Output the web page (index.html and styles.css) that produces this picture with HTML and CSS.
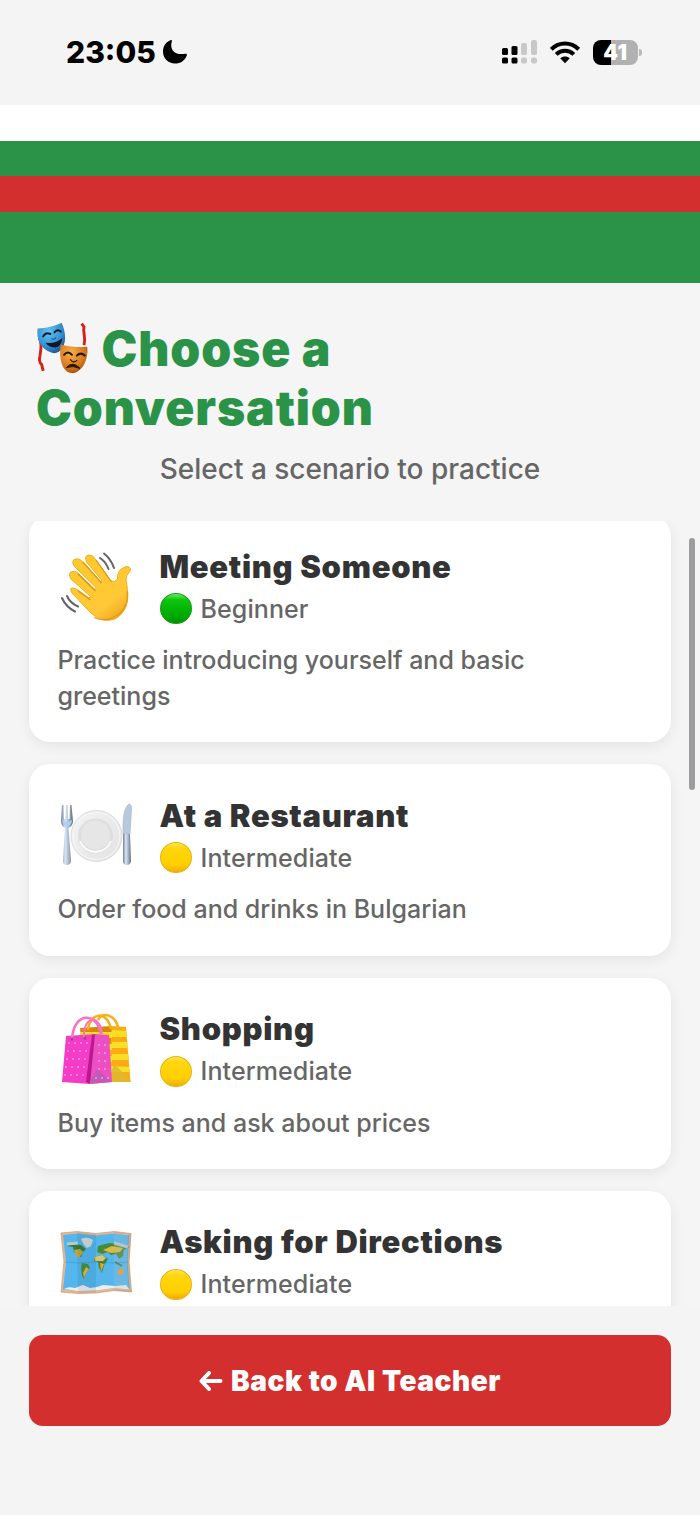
FILE: index.html
```html
<!DOCTYPE html>
<html lang="en">
<head>
    <meta charset="UTF-8">
    <meta name="viewport" content="width=device-width, initial-scale=1.0">
    <title>Choose a Conversation</title>
    <link rel="stylesheet" href="styles.css">
</head>
<body>
    <div class="status-bar">
        <span class="time">23:05</span>
        <svg class="moon" width="26" height="26" viewBox="0 0 26 26"><path d="M8.500 1.200C9.500.8 10.200 1.400 9.800 2.400C7.500 10 12 16.500 23.300 14.800C24.500 14.600 25.200 15.300 24.800 16.400C22.800 21.600 18.500 24.500 13 24.500C6 24.500 1 19.300 1 12.600C1 7.200 4 2.700 8.500 1.200Z"/></svg>
        <svg class="signal" width="36" height="26" viewBox="0 0 36 26">
            <rect x="0" y="9" width="6" height="7" rx="1.500"/><rect x="9.500" y="7" width="6" height="9" rx="1.500"/>
            <rect x="0" y="18.500" width="6" height="6" rx="1.500"/><rect x="9.500" y="18.500" width="6" height="6" rx="1.500"/>
            <g fill="#c8c8c8"><rect x="19" y="4" width="6" height="12" rx="2"/><rect x="29" y="1" width="6" height="15" rx="2"/><rect x="19" y="18.500" width="6" height="6" rx="2"/><rect x="29" y="18.500" width="6" height="6" rx="2"/></g>
        </svg>
        <svg class="wifi" width="30" height="23" viewBox="0 0 30 23">
            <g fill="none" stroke="#000" stroke-width="4"><path d="M1.300 8.300C9 .5 21 .5 28.700 8.300"/><path d="M6.200 13.400C11.400 8.600 18.600 8.600 23.800 13.400"/></g>
            <path d="M10.200 17.300C13 14.900 17 14.900 19.800 17.300L15 22.200Z"/>
        </svg>
        <div class="battery">41</div>
    </div>

    <div class="flag">
        <div class="white"></div>
        <div class="green"></div>
        <div class="red"></div>
        <div class="green wide"></div>
    </div>

    <header>
        <h1>
            <svg class="masks" width="52" height="52" viewBox="0 0 65 65">
                <defs>
                    <radialGradient id="blueMask" cx=".4" cy=".3" r=".8"><stop offset="0" stop-color="#62c4f4"/><stop offset=".6" stop-color="#328fd2"/><stop offset="1" stop-color="#194a8c"/></radialGradient>
                    <radialGradient id="orangeMask" cx=".4" cy=".3" r=".8"><stop offset="0" stop-color="#f8b04a"/><stop offset=".6" stop-color="#d9791c"/><stop offset="1" stop-color="#964609"/></radialGradient>
                </defs>
                <g fill="none" stroke="#d42115" stroke-width="3.600"><path d="M4 20C8 26 6 36 5 42Q3 50 7 53L9 61"/><path d="M57 2L60 6C58 14 63 18 60 29"/></g>
                <path d="M2 8C12 8 24 5 32 1C38 14 38 28 31 35Q26 41 19 38C7 34 0 23 2 8Z" fill="url(#blueMask)"/>
                <g fill="none" stroke="#141b28" stroke-width="2.500" stroke-linecap="round"><path d="M9 18Q12 12 18 15"/><path d="M23 13Q27 8 31 12"/></g>
                <path d="M12 26Q24 28 33 20Q31 32 24 32Q16 32 12 26Z" fill="#101725"/>
                <path d="M19 20Q22 24 25 19" fill="none" stroke="#1b5c9e" stroke-width="1.500"/>
                <path d="M31 28C42 31 54 32 64 31C66 46 58 63 46 64C33 64 28 46 31 28Z" fill="url(#orangeMask)"/>
                <g fill="none" stroke="#22160d" stroke-width="2.500" stroke-linecap="round"><path d="M35 41Q40 35 45 41"/><path d="M51 42Q56 37 61 42"/><path d="M43 47Q47 52 51 48" stroke-width="1.500"/></g>
                <path d="M38 57Q46 48 55 58Q46 54 38 57Z" fill="#22160d" stroke="#22160d" stroke-width="1.200"/>
            </svg>
            <span>Choose a</span><br>
            <span>Conversation</span>
        </h1>
        <p>Select a scenario to practice</p>
    </header>

    <main>
        <div class="card">
            <div class="card-header">
                <svg class="icon" width="76" height="76" viewBox="7 7 76 76">
                    <defs><linearGradient id="hand" x1="0" y1="0" x2=".7" y2="1"><stop offset="0" stop-color="#ffc928"/><stop offset=".8" stop-color="#ffc837"/><stop offset="1" stop-color="#f4ad20"/></linearGradient></defs>
                    <path d="M22 52Q19 47 22.500 47Q25 47 28 49L39 57L40.500 55.500L21 38Q18 33 21 31Q25 29 28 32L44.500 48L46 46.500L24 25Q21 19 25.500 18Q29.500 17 33 21L50.500 40.500L52 39.500L36.500 21Q34 15 38.500 14Q43 13.500 46 19L61 40Q65 42 67.500 38Q67 30 73 27Q78 24 80.500 27.500Q81 30 77 34Q75 38 77 45Q80 62 73 71Q66 81 54 79Q45 77 37 68Z" fill="url(#hand)" stroke="#eeac24" stroke-width="1"/>
                    <path d="M28 50L40.500 59M28 33L45.500 50M33 21L51.500 42M46 19L61.500 41" fill="none" stroke="#dc951e" stroke-width="1.300"/>
                    <path d="M44 76.500Q59 83 71 71Q79 62 77 50" fill="none" stroke="#e19a20" stroke-width="1.300"/>
                    <g fill="none" stroke="#626365" stroke-width="2" stroke-linecap="round"><path d="M50 17Q56 21 58.500 28"/><path d="M54 12.500Q61 18 64 27"/><path d="M12 57Q16 66 25 70.500"/><path d="M17 55Q20 62 28 65.500"/></g>
                </svg>
                <div class="info">
                    <h2>Meeting Someone</h2>
                    <div class="level"><i class="dot beginner"></i>Beginner</div>
                </div>
            </div>
            <p>Practice introducing yourself and basic greetings</p>
        </div>

        <div class="card">
            <div class="card-header">
                <svg class="icon" width="76" height="76" viewBox="7 7 76 76">
                    <defs>
                        <linearGradient id="plate" x1="0" y1="0" x2="1" y2="1"><stop offset="0" stop-color="#f4f4f4"/><stop offset="1" stop-color="#e2e2e2"/></linearGradient>
                        <linearGradient id="steel"><stop offset="0" stop-color="#777d85"/><stop offset=".35" stop-color="#d8e6f7"/><stop offset=".65" stop-color="#a5b7cb"/><stop offset="1" stop-color="#666b72"/></linearGradient>
                    </defs>
                    <circle cx="46.500" cy="46" r="25.500" fill="url(#plate)" stroke="#d0d0d0" stroke-width=".7"/>
                    <circle cx="46.500" cy="46" r="23.500" fill="none" stroke="#f8f8f8"/>
                    <circle cx="45.500" cy="46" r="17.500" fill="#dedede"/>
                    <path d="M30 51A16.500 16.500 0 0 0 61 51" fill="none" stroke="#fff" stroke-width="1.700"/>
                    <circle cx="45.500" cy="45" r="14.500" fill="#e6e6e6"/>
                    <path d="M12 15L13.500 15L14 29H15.500L16 15H17.500L18 29H19.500L20 15H21.500L23 31Q23 36 18.500 38L21 71Q20.500 75 17 75Q13 75 13 71L15 38Q11 36 11 31Z" fill="url(#steel)"/>
                    <path d="M12 30Q17 34 22 30Q22 35 17 37Q13 35 12 30Z" fill="#a9cfff"/>
                    <path d="M73 44V32Q74 17 79 14Q82 14 81.500 20L80 44Z" fill="#b7c9dc" stroke="#a5b5c5" stroke-width=".6"/>
                    <path d="M73 44H80L81 71Q80.500 75 77 75Q73 75 73 71Z" fill="url(#steel)"/>
                </svg>
                <div class="info">
                    <h2>At a Restaurant</h2>
                    <div class="level"><i class="dot"></i>Intermediate</div>
                </div>
            </div>
            <p>Order food and drinks in Bulgarian</p>
        </div>

        <div class="card">
            <div class="card-header">
                <svg class="icon" width="76" height="76" viewBox="7 9 76 76">
                    <path d="M30 26L62 24L59 80L35 78Z" fill="#d78a00"/>
                    <path d="M62 24L76 25L80.500 80L58 80Z" fill="#ffa916"/>
                    <g fill="#f6df25"><path d="M30 30H62V36H30ZM31 42H62V48H31ZM31 54H62V60H31Z"/><path d="M62 28L76 29L76.500 35H62ZM62 40H77L77.500 46H62ZM62 52H78L79 58H62ZM61 64L79 65L80 70H61Z"/></g>
                    <path d="M58 80L64 62L80.500 78V80Z" fill="#d9b92f" opacity=".8"/>
                    <g fill="none" stroke="#f9ae14" stroke-width="2.500"><path d="M38 28C40 10 57 8 61 27"/><path d="M48 18C53 9 65 13 68 25"/></g>
                    <path d="M16 34L46 32L40 82L12 80Z" fill="#f53cc6"/>
                    <path d="M45 32L59 33L62 80L39 82Z" fill="#ec4ec4"/>
                    <path d="M45 32L40 82L36 80L42 33Z" fill="#bb188d"/>
                    <path d="M39 82L47 67L62 80Z" fill="#c35bb6"/>
                    <g fill="none" stroke="#ff94e8" stroke-width="2" stroke-linecap="round" stroke-dasharray="0 6"><path d="M19 41H42M18 49H41M17 57H40M16 65H39M15 73H38M49 43H57M49 51H58M49 59H59M49 67H60M46 76H60"/></g>
                    <path d="M22 37C24 9 47 10 51 32" fill="none" stroke="#ff70bf" stroke-width="2.500"/>
                    <path d="M34 36C33 12 51 13 52 32" fill="none" stroke="#fb72c7" stroke-width="2"/>
                    <circle cx="22" cy="37" r="1.500" fill="#98467d"/><circle cx="35" cy="36" r="1.500" fill="#98467d"/>
                </svg>
                <div class="info">
                    <h2>Shopping</h2>
                    <div class="level"><i class="dot"></i>Intermediate</div>
                </div>
            </div>
            <p>Buy items and ask about prices</p>
        </div>

        <div class="card last">
            <div class="card-header">
                <svg class="icon" width="76" height="76" viewBox="7 8 76 76">
                    <path d="M11 17L27 15.500L46 17.500L64 15.500L81 17.500L79 46L81.500 76L64 74.500L46 77L28 77.500L11 76L14 46Z" fill="#e7b88e" stroke="#c99878" stroke-width=".7"/>
                    <path d="M13 19L27 17.500L46 19.500L64 17.500L79 19.500L77.500 46L79.500 73.500L64 72L46 74.500L28 75L13 73.500L16 46Z" fill="#54b6ed"/>
                    <path d="M14 73Q18 70 25 72L33 69L40 72L47 71L53 69L65 70L76 69L79.500 73.500L64 72L46 74.500L28 75Z" fill="#eee"/>
                    <path d="M31 23Q37 20 43 24L41 30L37 32L34 29Z" fill="#d6dcda"/>
                    <path d="M17 30L20 28L31 29L36 33L32 37L31 41L27 39L24 36L23 31Z" fill="#3c7b36"/>
                    <path d="M24 34L30 33L33 36L29 42L26 40Z" fill="#c5a63b"/>
                    <path d="M32 47L38 48L40 52L36 57L34 63L32 60L31 52Z" fill="#459235"/>
                    <path d="M36 51L39 53L36 57L34 62L33 57Z" fill="#eab943"/>
                    <path d="M48 30L59 27L70 28L79 31L74 34L73 40L69 43L66 38L61 39L58 36L52 38L47 36Z" fill="#488a38"/>
                    <path d="M53 34L62 30L73 32L70 36L61 37Z" fill="#ddb93e"/>
                    <path d="M44 41L52 39L58 43L54 49L52 57L49 52L48 46L44 45Z" fill="#438338"/>
                    <path d="M44 41L52 39L56 42L53 45L45 45Z" fill="#d9c270"/><path d="M50 47L54 48L51 56Z" fill="#dda929"/>
                    <path d="M68 54L73 52L74 57L70 59L67 58Z" fill="#ef9a25"/><path d="M65 46L72 50" stroke="#407e38" stroke-width="2"/>
                    <path d="M17 28L28 27M64 27L78 31" stroke="#bdc8c9" stroke-width="3"/>
                    <path d="M27 16L46 18V76L28 77ZM64 16L81 18L79 46L81 76L64 74Z" fill="#174662" opacity=".1"/>
                    <path d="M64 17L78 18L77 47L79 74L64 73Z" fill="#fff" opacity=".16"/>
                    <path d="M15 46L28 47L46 46L64 47L78 46" fill="none" stroke="#2e779c" stroke-width=".6" opacity=".5"/>
                </svg>
                <div class="info">
                    <h2>Asking for Directions</h2>
                    <div class="level"><i class="dot"></i>Intermediate</div>
                </div>
            </div>
        </div>
        <div class="scrollbar"></div>
    </main>

    <footer>
        <button>
            <svg width="24" height="20" viewBox="0 0 24 20"><path d="M10 2L2.500 10L10 18M3 10H21.500" fill="none" stroke="#fff" stroke-width="4" stroke-linecap="round" stroke-linejoin="round"/></svg>
            <span>Back to AI Teacher</span>
        </button>
    </footer>
</body>
</html>
```
FILE: styles.css
```css
* {
    box-sizing: border-box;
}
body {
    margin: 0;
    height: 1515px;
    overflow: hidden;
    background: #f5f5f5;
    font-family: Inter, "Liberation Sans", sans-serif;
    display: flex;
    flex-direction: column;
}
h1, h2, p {
    margin: 0;
}
.status-bar {
    height: 105px;
    flex-shrink: 0;
    padding: 0 62px 1px 66px;
    display: flex;
    align-items: center;
    background: #f4f4f4;
}
.time {
    width: 91px;
    font-size: 30px;
    font-weight: 800;
    white-space: nowrap;
}
.moon {
    margin-left: 5px;
}
.signal {
    margin-left: auto;
}
.wifi {
    margin: 0 13px 0 12px;
}
.battery {
    position: relative;
    width: 45px;
    height: 25px;
    border-radius: 8px;
    background: linear-gradient(90deg, #000 41%, #b1b1b1 41%);
    color: #fff;
    font-size: 21px;
    line-height: 25px;
    font-weight: 900;
    letter-spacing: 0.8px;
    text-align: center;
}
.battery::after {
    content: "";
    position: absolute;
    left: 46px;
    top: 9px;
    width: 3px;
    height: 7px;
    border-radius: 0 3px 3px 0;
    background: #b7b7b7;
}
.flag {
    flex-shrink: 0;
}
.flag div {
    height: 35.5px;
}
.flag .white {
    background: #fff;
}
.flag .green {
    background: #2a9348;
}
.flag .red {
    background: #d32f2f;
}
.flag .wide {
    height: 71.5px;
}
header {
    height: 238px;
    flex-shrink: 0;
    padding: 36px 36px 0;
}
h1 {
    font-size: 48px;
    line-height: 59px;
    font-weight: 900;
    letter-spacing: 0.9px;
    color: #2a9348;
}
.masks {
    vertical-align: -8px;
    margin: 0 3px 0 0;
}
header p {
    margin-top: 15px;
    font-size: 28px;
    line-height: 34px;
    font-weight: 500;
    color: #666;
    text-align: center;
}
main {
    position: relative;
    height: 785px;
    flex-shrink: 0;
    overflow: hidden;
    padding: 0 29px;
}
.card {
    background: #fff;
    border-radius: 21px;
    padding: 29px 29px 28px 28.5px;
    margin-bottom: 21.8px;
    box-shadow: 0 4px 14px rgba(0, 0, 0, 0.07);
}
.card:first-child {
    margin-top: -5.6px;
}
.card.last {
    height: 191px;
}
.card-header {
    display: flex;
    align-items: center;
    height: 84px;
    margin-bottom: 15px;
}
.icon {
    margin: 0 26px 0 -1px;
}
.info {
    margin-left: 1px;
}
h2 {
    font-size: 31px;
    line-height: 38px;
    font-weight: 900;
    letter-spacing: 0.7px;
    color: #333;
}
.level {
    display: flex;
    align-items: center;
    gap: 9px;
    margin-top: 7px;
    font-size: 25px;
    line-height: 32px;
    font-weight: 500;
    letter-spacing: 0.1px;
    color: #666;
}
.dot {
    width: 32px;
    height: 31px;
    border-radius: 50%;
    background: linear-gradient(#ffe34c, #ffd60c 20%, #ffcf00 75%, #f0ac00);
    border: 1px solid #e9b211;
}
.dot.beginner {
    background: linear-gradient(#65ef60, #0ac60d 20%, #00a900 75%, #009500);
    border-color: #159b18;
}
.card p {
    font-size: 25px;
    line-height: 35.5px;
    font-weight: 500;
    color: #666;
}
.scrollbar {
    position: absolute;
    right: 5px;
    top: 17px;
    width: 6px;
    height: 252px;
    border-radius: 3px;
    background: #9c9c9e;
}
footer {
    flex: 1;
    background: #f4f4f4;
    padding: 29px;
}
button {
    width: 100%;
    height: 91px;
    border: 0;
    border-radius: 14px;
    background: #d32f2f;
    color: #fff;
    font-family: inherit;
    font-size: 28px;
    font-weight: 900;
    letter-spacing: 0.55px;
    display: flex;
    align-items: center;
    justify-content: center;
    gap: 8px;
}
```
